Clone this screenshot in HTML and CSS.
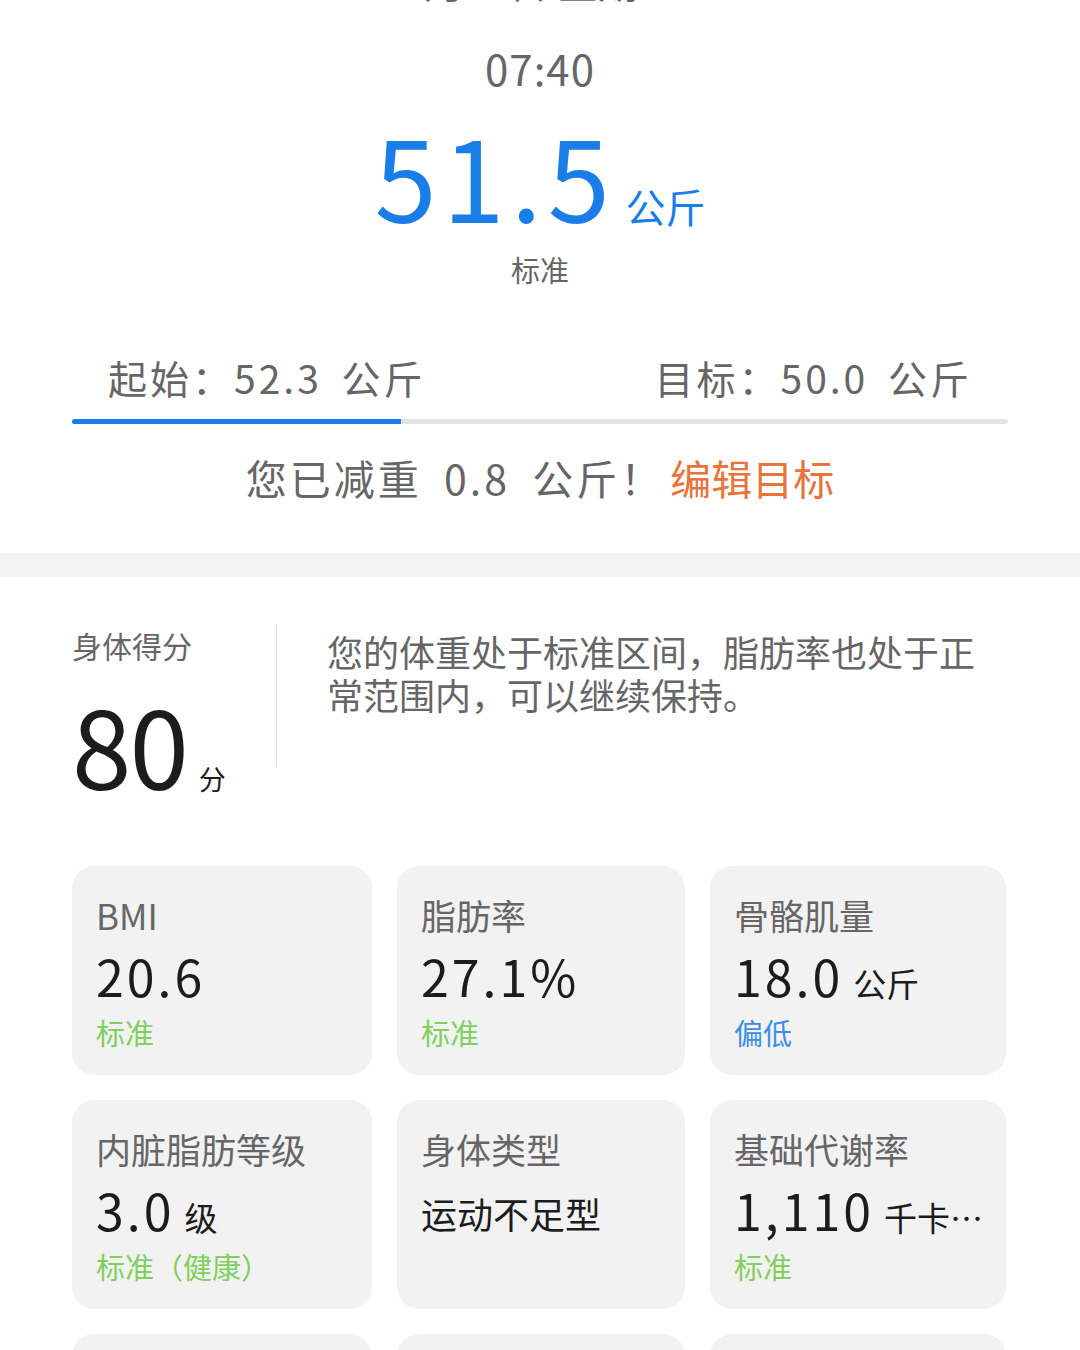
FILE: index.html
```html
<!DOCTYPE html>
<html lang="zh-CN">
<head>
    <meta charset="UTF-8">
    <meta name="viewport" content="width=device-width, initial-scale=1.0">
    <title>体重</title>
    <link rel="stylesheet" href="styles.css">
</head>
<body>

    <div class="summary">
        <div class="date">3月15日 星期一</div>
        <div class="time">07:40</div>
        <div class="weight">
            <span class="weight-num">51.5</span>
            <span class="weight-unit">公斤</span>
        </div>
        <div class="weight-level">标准</div>

        <div class="goal">
            <div class="goal-labels">
                <span>起始：52.3 公斤</span>
                <span>目标：50.0 公斤</span>
            </div>
            <div class="goal-bar">
                <div class="goal-fill" style="width: 35.1%;"></div>
            </div>
        </div>

        <p class="lost">您已减重 0.8 公斤！<a class="edit-goal" href="#">编辑目标</a></p>
    </div>

    <div class="band"></div>

    <div class="score">
        <div class="score-left">
            <div class="score-title">身体得分</div>
            <div class="score-value"><span class="score-num">80</span><span class="score-unit">分</span></div>
        </div>
        <p class="score-text">您的体重处于标准区间，脂肪率也处于正常范围内，可以继续保持。</p>
    </div>

    <div class="metrics">
        <div class="card">
            <div class="card-title">BMI</div>
            <div class="card-value"><span class="card-num">20.6</span></div>
            <div class="card-status ok">标准</div>
        </div>
        <div class="card">
            <div class="card-title">脂肪率</div>
            <div class="card-value"><span class="card-num">27.1%</span></div>
            <div class="card-status ok">标准</div>
        </div>
        <div class="card">
            <div class="card-title">骨骼肌量</div>
            <div class="card-value"><span class="card-num">18.0</span><span class="card-unit">公斤</span></div>
            <div class="card-status low">偏低</div>
        </div>
        <div class="card">
            <div class="card-title">内脏脂肪等级</div>
            <div class="card-value"><span class="card-num">3.0</span><span class="card-unit">级</span></div>
            <div class="card-status ok">标准（健康）</div>
        </div>
        <div class="card">
            <div class="card-title">身体类型</div>
            <div class="card-text">运动不足型</div>
        </div>
        <div class="card">
            <div class="card-title">基础代谢率</div>
            <div class="card-value"><span class="card-num">1,110</span><span class="card-unit">千卡/天</span></div>
            <div class="card-status ok">标准</div>
        </div>
        <div class="card"></div>
        <div class="card"></div>
        <div class="card"></div>
    </div>

</body>
</html>
```

FILE: styles.css
```css
body {
    margin: 0;
    background-color: #ffffff;
    font-family: "Noto Sans CJK SC", "Noto Sans", sans-serif;
    color: #666666;
    height: 1350px;
    overflow: hidden;
}

.summary {
    padding: 0 72px;
    text-align: center;
}

.date {
    font-size: 40px;
    line-height: 50px;
    margin-top: -44px;
    color: #666666;
}

.time {
    font-size: 42px;
    line-height: 60px;
    margin-top: 32px;
    letter-spacing: 1px;
}

.weight {
    margin-top: 43px;
    color: #1a7ee8;
    line-height: 66px;
}

.weight-num {
    font-size: 112px;
    letter-spacing: 6px;
}

.weight-unit {
    font-size: 40px;
    margin-left: 6px;
}

.weight-level {
    font-size: 29px;
    line-height: 40px;
}

.goal {
    margin-top: 63px;
}

.goal-labels {
    display: flex;
    justify-content: space-between;
    padding: 0 36px;
    font-size: 39px;
    line-height: 50px;
    letter-spacing: 3px;
    word-spacing: 8px;
}

.goal-bar {
    margin-top: 17px;
    height: 5px;
    background-color: #e4e4e4;
    border-radius: 3px;
    overflow: hidden;
}

.goal-fill {
    height: 100%;
    background-color: #1a7ee8;
}

.lost {
    margin: 23px 0 0;
    font-size: 41px;
    line-height: 60px;
    padding-bottom: 46px;
    letter-spacing: 3px;
    word-spacing: 10px;
}

.edit-goal {
    color: #e8743b;
    text-decoration: none;
    margin-left: 6px;
    letter-spacing: 0;
}

.band {
    height: 24px;
    background-color: #f4f4f4;
}

.score {
    display: flex;
    padding: 47px 72px 0;
}

.score-left {
    width: 204px;
    border-right: 1px solid #dddddd;
    height: 143px;
}

.score-title {
    font-size: 30px;
    line-height: 40px;
    margin-top: 1px;
}

.score-value {
    margin-top: 24px;
    color: #1c1c1c;
    line-height: 110px;
    white-space: nowrap;
}

.score-num {
    font-size: 107px;
    letter-spacing: -2px;
}

.score-unit {
    font-size: 27px;
    margin-left: 12px;
}

.score-text {
    margin: 6px 0 0 50px;
    width: 680px;
    font-size: 36px;
    line-height: 43px;
}

.metrics {
    display: grid;
    grid-template-columns: 300px 288px 296px;
    grid-auto-rows: 209px;
    gap: 25px;
    padding: 0 72px;
    margin-top: 99px;
}

.card {
    background-color: #f2f2f2;
    border-radius: 22px;
    padding: 26px 0 0 24px;
    overflow: hidden;
}

.card-title {
    font-size: 35px;
    line-height: 46px;
}

.card-value {
    margin-top: 12px;
    font-size: 33px;
    line-height: 62px;
    color: #1c1c1c;
    white-space: nowrap;
    overflow: hidden;
    text-overflow: ellipsis;
    padding-right: 18px;
}

.card-num {
    font-size: 50px;
    line-height: 1;
    letter-spacing: 3px;
}

.card-unit {
    margin-left: 10px;
}

.card-text {
    margin-top: 18px;
    font-size: 36px;
    line-height: 46px;
    color: #1c1c1c;
}

.card-status {
    font-size: 29px;
    line-height: 40px;
    margin-top: -2px;
}

.ok {
    color: #7fd05c;
}

.low {
    color: #3a8ee6;
}
```
